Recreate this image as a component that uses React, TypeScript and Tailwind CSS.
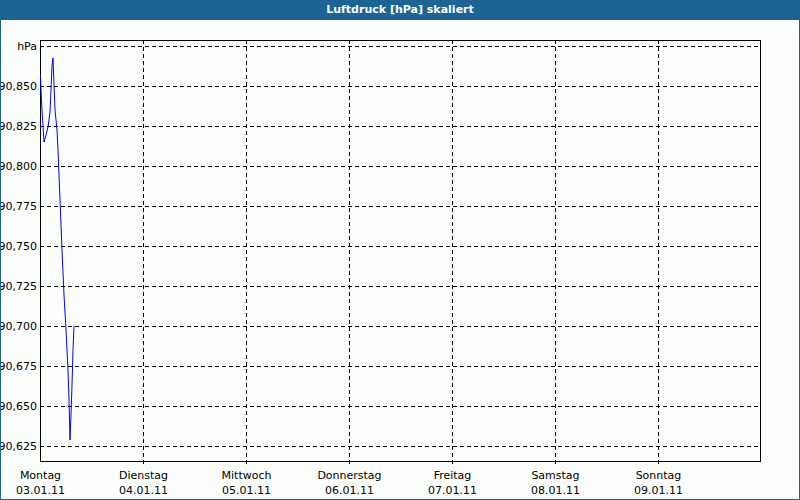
export default function App() {
  const ys = [86, 126, 166, 206, 246, 286, 326, 366, 406, 446];
  const yl = ["990,850","990,825","990,800","990,775","990,750","990,725","990,700","990,675","990,650","990,625"];
  const xs = [40, 143, 246, 349, 452, 555, 658];
  const days = ["Montag","Dienstag","Mittwoch","Donnerstag","Freitag","Samstag","Sonntag"];
  const dates = ["03.01.11","04.01.11","05.01.11","06.01.11","07.01.11","08.01.11","09.01.11"];
  const pts = "40.5,75 41,90 42,110 44,142 46,135 48,127 50,112 51,90 52,66 53,58 54,85 55,110 57,130 58,150 60,200 62,250 64,295 66,330 67,350 68,370 69,400 70,440 71,415 72,385 73,350 74,326";
  return (
    <div className="w-[800px] h-[500px] flex flex-col bg-[#1c6496]" style={{ fontFamily: '"DejaVu Sans", Verdana, sans-serif' }}>
      <div className="h-[20px] flex items-center justify-center text-white font-bold text-[11px]">Luftdruck [hPa] skaliert</div>
      <div className="flex-1 mx-px mb-px bg-[#fcfffc] overflow-hidden">
        <svg width="798" height="479" viewBox="1 20 798 479" className="block">
          {ys.map((y) => (
            <line key={y} x1={40} x2={760} y1={y + 0.5} y2={y + 0.5} stroke="#000" strokeDasharray="4 3" />
          ))}
          <line x1={40} x2={760} y1={46.5} y2={46.5} stroke="#000" strokeDasharray="4 3" />
          {xs.slice(1).map((x) => (
            <line key={x} x1={x + 0.5} x2={x + 0.5} y1={40} y2={467} stroke="#000" strokeDasharray="4 3" />
          ))}
          <rect x={40.5} y={40.5} width={720} height={421} fill="none" stroke="#000" />
          <polyline points={pts} fill="none" stroke="#0000ff" strokeWidth={1} />
          <text x={37} y={50} textAnchor="end" fontSize="11" fill="#000">hPa</text>
          {ys.map((y, i) => (
            <text key={i} x={37} y={y + 4} textAnchor="end" fontSize="11" fill="#000">{yl[i]}</text>
          ))}
          {xs.map((x, i) => (
            <g key={i}>
              <text x={x + 0.5} y={479} textAnchor="middle" fontSize="11" fill="#000">{days[i]}</text>
              <text x={x + 0.5} y={494} textAnchor="middle" fontSize="11" fill="#000">{dates[i]}</text>
            </g>
          ))}
        </svg>
      </div>
    </div>
  );
}
